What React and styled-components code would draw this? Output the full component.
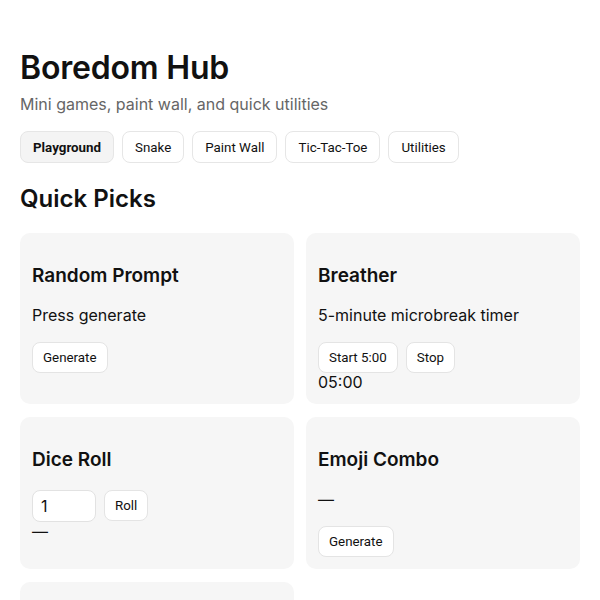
import React from 'react';
import styled, { createGlobalStyle } from 'styled-components';

const GlobalStyles = createGlobalStyle`
  body {
    margin: 0;
    background: #fff;
    color: #111;
    font-family: Inter, "Noto Sans", sans-serif;
  }
`;

const tabs = ['Playground', 'Snake', 'Paint Wall', 'Tic-Tac-Toe', 'Utilities'];

const App = () => {
  return (
    <Page>
      <GlobalStyles />
      <Title>Boredom Hub</Title>
      <Subtitle>Mini games, paint wall, and quick utilities</Subtitle>
      <TabBar>
        {tabs.map((t, i) => (
          <Tab key={t} active={i === 0}>
            {t}
          </Tab>
        ))}
      </TabBar>
      <SectionTitle>Quick Picks</SectionTitle>
      <CardGrid>
        <Card>
          <CardTitle>Random Prompt</CardTitle>
          <CardText>Press generate</CardText>
          <Button>Generate</Button>
        </Card>
        <Card>
          <CardTitle>Breather</CardTitle>
          <CardText>5-minute microbreak timer</CardText>
          <Row>
            <Button>Start 5:00</Button>
            <Button>Stop</Button>
          </Row>
          <Output>05:00</Output>
        </Card>
        <Card>
          <CardTitle>Dice Roll</CardTitle>
          <Row>
            <NumberInput type="number" defaultValue={1} />
            <Button>Roll</Button>
          </Row>
          <Output>—</Output>
        </Card>
        <Card>
          <CardTitle>Emoji Combo</CardTitle>
          <CardText>—</CardText>
          <Button>Generate</Button>
        </Card>
        <Card>
          <CardTitle>Coin Flip</CardTitle>
          <CardText>—</CardText>
          <Button>Flip</Button>
        </Card>
      </CardGrid>
    </Page>
  );
};

const Page = styled.div`
  padding: 49px 20px 24px;
`;

const Title = styled.h1`
  margin: 0;
  font-size: 32px;
  line-height: 38px;
  font-weight: 600;
  letter-spacing: -0.2px;
`;

const Subtitle = styled.p`
  margin: 8px 0 0;
  font-size: 16px;
  line-height: 19px;
  color: #666;
`;

const TabBar = styled.nav`
  display: flex;
  gap: 8px;
  margin-top: 17px;
`;

const Tab = styled.button`
  height: 32px;
  padding: 0 12px;
  border: 1px solid #e6e6e6;
  border-radius: 8px;
  background: ${(p) => (p.active ? '#f4f4f4' : '#fff')};
  font-family: Roboto, "Liberation Sans", sans-serif;
  font-size: 13.333px;
  font-weight: ${(p) => (p.active ? 700 : 400)};
  color: #111;
  cursor: pointer;
`;

const SectionTitle = styled.h2`
  margin: 21px 0 0;
  font-size: 24px;
  line-height: 29px;
  font-weight: 600;
`;

const CardGrid = styled.div`
  display: grid;
  grid-template-columns: 1fr 1fr;
  gap: 13px 12px;
  margin-top: 20px;
`;

const Card = styled.section`
  background: #f6f6f6;
  border-radius: 10px;
  padding: 12px;
`;

const CardTitle = styled.h3`
  margin: 19px 0 18px;
  font-size: 19px;
  line-height: 24px;
  font-weight: 600;
`;

const CardText = styled.p`
  margin: 0 0 17px;
  font-size: 16px;
  line-height: 19px;
`;

const Row = styled.div`
  display: flex;
  gap: 8px;
`;

const Button = styled.button`
  height: 31px;
  padding: 0 10px;
  border: 1px solid #e4e4e4;
  border-radius: 8px;
  background: #fff;
  font-family: Roboto, "Liberation Sans", sans-serif;
  font-size: 13.333px;
  color: #111;
  cursor: pointer;
`;

const NumberInput = styled.input`
  width: 64px;
  height: 32px;
  box-sizing: border-box;
  padding: 0 8px;
  border: 1px solid #e2e2e2;
  border-radius: 8px;
  background: #fff;
  font-family: Inter, sans-serif;
  font-size: 16px;
  color: #111;
  -moz-appearance: textfield;
  &::-webkit-inner-spin-button,
  &::-webkit-outer-spin-button {
    -webkit-appearance: none;
    margin: 0;
  }
`;

const Output = styled.div`
  font-size: 16px;
  line-height: 19px;
`;

export default App;
